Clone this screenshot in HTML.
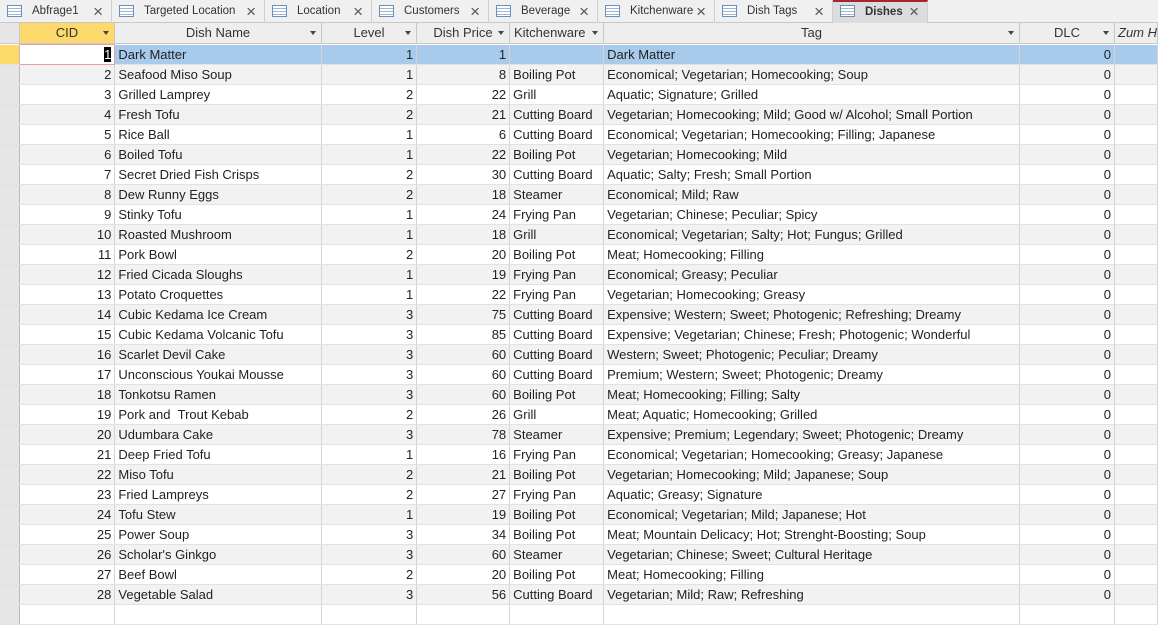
<!DOCTYPE html><html><head><style>
*{margin:0;padding:0;box-sizing:border-box}
body{width:1158px;height:608px;overflow:hidden;background:#fff;font-family:"Liberation Sans","DejaVu Sans",sans-serif;font-size:13px;color:#222;position:relative}
.tabs{position:absolute;left:0;top:0;width:1158px;height:23px;background:#f0f0f0;border-bottom:1px solid #c8c8c8}
.tab{position:absolute;top:0;height:23px;border-right:1px solid #d0d0d0;font-size:11.5px;line-height:23px;padding-left:32px;color:#333}
.tab .ic{position:absolute;left:7px;top:5px;width:15px;height:12px;border:1px solid #6a8fb8;background:repeating-linear-gradient(#fff 0 2px,#9cb8d8 2px 3px)}
.tab .x{position:absolute;right:8px;top:0;font-size:17px;font-weight:normal;color:#555}
.tab.act{background:#dcdcdc;border-top:2px solid #a4262c;font-weight:bold;line-height:21px}
.hdr{position:absolute;top:23px;height:21px;background:#eeeeee;border-right:1px solid #c8c8c8;border-bottom:1px solid #c8c8c8;text-align:center;line-height:20px;color:#333}
.hdr .a{position:absolute;right:5px;top:8px;width:0;height:0;border-left:3px solid transparent;border-right:3px solid transparent;border-top:4px solid #444}
table{position:absolute;left:0;top:44px;border-collapse:collapse;table-layout:fixed}
td{height:20px;border-right:1px solid #d4d4d4;border-bottom:1px solid #e2e2e2;padding:0 3px;white-space:nowrap;overflow:hidden;line-height:19px}
tr:nth-child(even) td{background:#f2f2f2}
td.s{background:#e6e6e6!important;border-right:1px solid #bbb}
td.r{text-align:right}
tr.sel td{background:#a8cbec!important}
</style></head><body>
<div class="tabs">
<div class="tab" style="left:0;width:112px"><span class="ic"></span>Abfrage1<span class="x">×</span></div>
<div class="tab" style="left:112px;width:153px"><span class="ic"></span>Targeted Location<span class="x">×</span></div>
<div class="tab" style="left:265px;width:107px"><span class="ic"></span>Location<span class="x">×</span></div>
<div class="tab" style="left:372px;width:117px"><span class="ic"></span>Customers<span class="x">×</span></div>
<div class="tab" style="left:489px;width:109px"><span class="ic"></span>Beverage<span class="x">×</span></div>
<div class="tab" style="left:598px;width:117px"><span class="ic"></span>Kitchenware<span class="x">×</span></div>
<div class="tab" style="left:715px;width:118px"><span class="ic"></span>Dish Tags<span class="x">×</span></div>
<div class="tab act" style="left:833px;width:95px"><span class="ic" style="top:3px"></span>Dishes<span class="x" style="top:-1px">×</span></div>
</div>
<div class="hdr" style="left:0;width:20px;background:#e6e6e6"></div>
<div class="hdr" style="left:20px;width:95px;background:#fcd96a">CID<span class="a"></span></div>
<div class="hdr" style="left:115px;width:207px">Dish Name<span class="a"></span></div>
<div class="hdr" style="left:322px;width:95px">Level<span class="a"></span></div>
<div class="hdr" style="left:417px;width:93px">Dish Price<span class="a"></span></div>
<div class="hdr" style="left:510px;width:94px;text-align:left;padding-left:4px;overflow:hidden">Kitchenware<span class="a"></span></div>
<div class="hdr" style="left:604px;width:416px">Tag<span class="a"></span></div>
<div class="hdr" style="left:1020px;width:95px">DLC<span class="a"></span></div>
<div class="hdr" style="left:1115px;width:43px;font-style:italic;text-align:left;padding-left:3px;overflow:hidden;white-space:nowrap">Zum Hi</div>
<table>
<colgroup><col style="width:20px"><col style="width:95px"><col style="width:207px"><col style="width:95px"><col style="width:93px"><col style="width:94px"><col style="width:416px"><col style="width:95px"><col style="width:43px"></colgroup>
<tr class="sel"><td class="s" style="background:#fcd96a!important"></td><td class="r" style="background:#fff!important;border:1px solid #e8a0a0"><span style="background:#000;color:#fff">1</span></td><td>Dark Matter</td><td class="r">1</td><td class="r">1</td><td></td><td>Dark Matter</td><td class="r">0</td><td></td></tr>
<tr><td class="s"></td><td class="r">2</td><td>Seafood Miso Soup</td><td class="r">1</td><td class="r">8</td><td>Boiling Pot</td><td>Economical; Vegetarian; Homecooking; Soup</td><td class="r">0</td><td></td></tr>
<tr><td class="s"></td><td class="r">3</td><td>Grilled Lamprey</td><td class="r">2</td><td class="r">22</td><td>Grill</td><td>Aquatic; Signature; Grilled</td><td class="r">0</td><td></td></tr>
<tr><td class="s"></td><td class="r">4</td><td>Fresh Tofu</td><td class="r">2</td><td class="r">21</td><td>Cutting Board</td><td>Vegetarian; Homecooking; Mild; Good w/ Alcohol; Small Portion</td><td class="r">0</td><td></td></tr>
<tr><td class="s"></td><td class="r">5</td><td>Rice Ball</td><td class="r">1</td><td class="r">6</td><td>Cutting Board</td><td>Economical; Vegetarian; Homecooking; Filling; Japanese</td><td class="r">0</td><td></td></tr>
<tr><td class="s"></td><td class="r">6</td><td>Boiled Tofu</td><td class="r">1</td><td class="r">22</td><td>Boiling Pot</td><td>Vegetarian; Homecooking; Mild</td><td class="r">0</td><td></td></tr>
<tr><td class="s"></td><td class="r">7</td><td>Secret Dried Fish Crisps</td><td class="r">2</td><td class="r">30</td><td>Cutting Board</td><td>Aquatic; Salty; Fresh; Small Portion</td><td class="r">0</td><td></td></tr>
<tr><td class="s"></td><td class="r">8</td><td>Dew Runny Eggs</td><td class="r">2</td><td class="r">18</td><td>Steamer</td><td>Economical; Mild; Raw</td><td class="r">0</td><td></td></tr>
<tr><td class="s"></td><td class="r">9</td><td>Stinky Tofu</td><td class="r">1</td><td class="r">24</td><td>Frying Pan</td><td>Vegetarian; Chinese; Peculiar; Spicy</td><td class="r">0</td><td></td></tr>
<tr><td class="s"></td><td class="r">10</td><td>Roasted Mushroom</td><td class="r">1</td><td class="r">18</td><td>Grill</td><td>Economical; Vegetarian; Salty; Hot; Fungus; Grilled</td><td class="r">0</td><td></td></tr>
<tr><td class="s"></td><td class="r">11</td><td>Pork Bowl</td><td class="r">2</td><td class="r">20</td><td>Boiling Pot</td><td>Meat; Homecooking; Filling</td><td class="r">0</td><td></td></tr>
<tr><td class="s"></td><td class="r">12</td><td>Fried Cicada Sloughs</td><td class="r">1</td><td class="r">19</td><td>Frying Pan</td><td>Economical; Greasy; Peculiar</td><td class="r">0</td><td></td></tr>
<tr><td class="s"></td><td class="r">13</td><td>Potato Croquettes</td><td class="r">1</td><td class="r">22</td><td>Frying Pan</td><td>Vegetarian; Homecooking; Greasy</td><td class="r">0</td><td></td></tr>
<tr><td class="s"></td><td class="r">14</td><td>Cubic Kedama Ice Cream</td><td class="r">3</td><td class="r">75</td><td>Cutting Board</td><td>Expensive; Western; Sweet; Photogenic; Refreshing; Dreamy</td><td class="r">0</td><td></td></tr>
<tr><td class="s"></td><td class="r">15</td><td>Cubic Kedama Volcanic Tofu</td><td class="r">3</td><td class="r">85</td><td>Cutting Board</td><td>Expensive; Vegetarian; Chinese; Fresh; Photogenic; Wonderful</td><td class="r">0</td><td></td></tr>
<tr><td class="s"></td><td class="r">16</td><td>Scarlet Devil Cake</td><td class="r">3</td><td class="r">60</td><td>Cutting Board</td><td>Western; Sweet; Photogenic; Peculiar; Dreamy</td><td class="r">0</td><td></td></tr>
<tr><td class="s"></td><td class="r">17</td><td>Unconscious Youkai Mousse</td><td class="r">3</td><td class="r">60</td><td>Cutting Board</td><td>Premium; Western; Sweet; Photogenic; Dreamy</td><td class="r">0</td><td></td></tr>
<tr><td class="s"></td><td class="r">18</td><td>Tonkotsu Ramen</td><td class="r">3</td><td class="r">60</td><td>Boiling Pot</td><td>Meat; Homecooking; Filling; Salty</td><td class="r">0</td><td></td></tr>
<tr><td class="s"></td><td class="r">19</td><td>Pork and &nbsp;Trout Kebab</td><td class="r">2</td><td class="r">26</td><td>Grill</td><td>Meat; Aquatic; Homecooking; Grilled</td><td class="r">0</td><td></td></tr>
<tr><td class="s"></td><td class="r">20</td><td>Udumbara Cake</td><td class="r">3</td><td class="r">78</td><td>Steamer</td><td>Expensive; Premium; Legendary; Sweet; Photogenic; Dreamy</td><td class="r">0</td><td></td></tr>
<tr><td class="s"></td><td class="r">21</td><td>Deep Fried Tofu</td><td class="r">1</td><td class="r">16</td><td>Frying Pan</td><td>Economical; Vegetarian; Homecooking; Greasy; Japanese</td><td class="r">0</td><td></td></tr>
<tr><td class="s"></td><td class="r">22</td><td>Miso Tofu</td><td class="r">2</td><td class="r">21</td><td>Boiling Pot</td><td>Vegetarian; Homecooking; Mild; Japanese; Soup</td><td class="r">0</td><td></td></tr>
<tr><td class="s"></td><td class="r">23</td><td>Fried Lampreys</td><td class="r">2</td><td class="r">27</td><td>Frying Pan</td><td>Aquatic; Greasy; Signature</td><td class="r">0</td><td></td></tr>
<tr><td class="s"></td><td class="r">24</td><td>Tofu Stew</td><td class="r">1</td><td class="r">19</td><td>Boiling Pot</td><td>Economical; Vegetarian; Mild; Japanese; Hot</td><td class="r">0</td><td></td></tr>
<tr><td class="s"></td><td class="r">25</td><td>Power Soup</td><td class="r">3</td><td class="r">34</td><td>Boiling Pot</td><td>Meat; Mountain Delicacy; Hot; Strenght-Boosting; Soup</td><td class="r">0</td><td></td></tr>
<tr><td class="s"></td><td class="r">26</td><td>Scholar's Ginkgo</td><td class="r">3</td><td class="r">60</td><td>Steamer</td><td>Vegetarian; Chinese; Sweet; Cultural Heritage</td><td class="r">0</td><td></td></tr>
<tr><td class="s"></td><td class="r">27</td><td>Beef Bowl</td><td class="r">2</td><td class="r">20</td><td>Boiling Pot</td><td>Meat; Homecooking; Filling</td><td class="r">0</td><td></td></tr>
<tr><td class="s"></td><td class="r">28</td><td>Vegetable Salad</td><td class="r">3</td><td class="r">56</td><td>Cutting Board</td><td>Vegetarian; Mild; Raw; Refreshing</td><td class="r">0</td><td></td></tr>
<tr><td class="s"></td><td></td><td></td><td></td><td></td><td></td><td></td><td></td><td></td></tr>
</table>
</body></html>
